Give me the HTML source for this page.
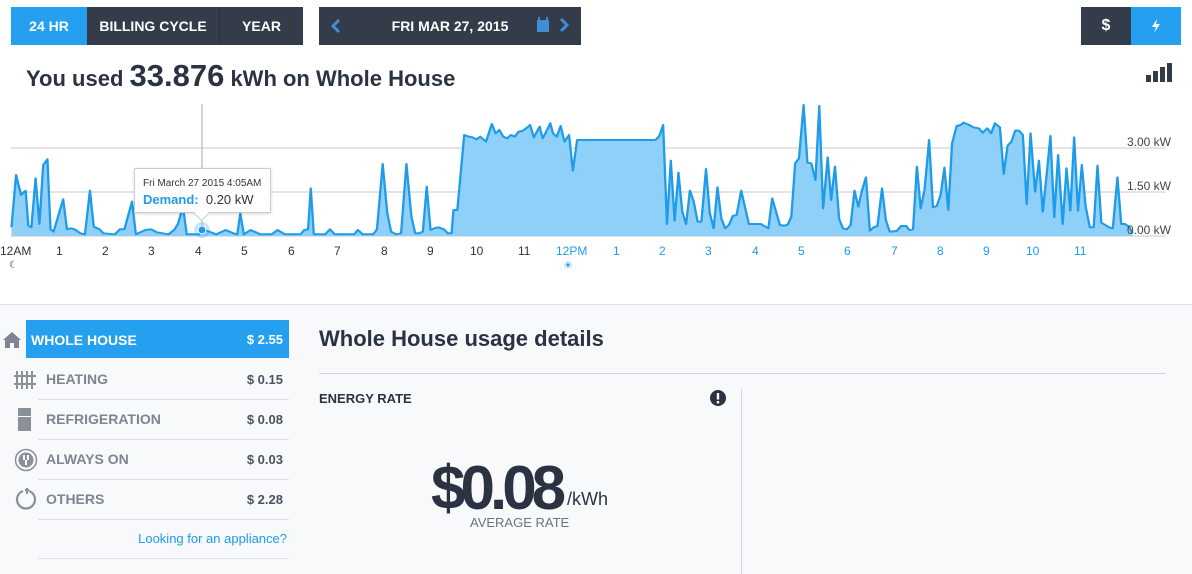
<!DOCTYPE html>
<html><head><meta charset="utf-8"><style>
*{margin:0;padding:0;box-sizing:border-box}
body{width:1192px;height:574px;overflow:hidden;background:#fff;font-family:"Liberation Sans",sans-serif;position:relative}
.a{position:absolute}
.btn{position:absolute;top:7px;height:38px;color:#fff;font-weight:bold;font-size:14px;display:flex;align-items:center;justify-content:center}
.dark{background:#343c4a}.blue{background:#25a0f0}
.lbl{position:absolute;font-size:12px;color:#333;top:244px}
.lblb{color:#1e9be9}
.row{position:absolute;left:38px;width:251px;height:40px;border-bottom:1px solid #dde1e5}
.row .n{position:absolute;left:8px;top:11px;font-weight:bold;font-size:14px;color:#7d8590}
.row .v{position:absolute;right:6px;top:12px;font-weight:bold;font-size:13px;color:#4b5260}
</style></head><body>
<div class="btn blue" style="left:11px;width:76px">24 HR</div>
<div class="btn dark" style="left:87px;width:133px;border-right:1px solid #2a313c">BILLING CYCLE</div>
<div class="btn dark" style="left:220px;width:83px">YEAR</div>
<div class="btn dark" style="left:319px;width:262px">FRI MAR 27, 2015</div>
<svg class="a" style="left:330px;top:18px" width="12" height="16"><path d="M9 2 L3 8 L9 14" stroke="#3c8fd6" stroke-width="3" fill="none"/></svg>
<svg class="a" style="left:536px;top:17px" width="40" height="18"><rect x="1" y="3" width="12" height="12" fill="#3c8fd6"/><rect x="2" y="0" width="2" height="4" fill="#3c8fd6"/><rect x="10" y="0" width="2" height="4" fill="#3c8fd6"/><path d="M25 2 L31 8 L25 14" stroke="#3c8fd6" stroke-width="3" fill="none"/></svg>
<div class="btn dark" style="left:1081px;width:50px;font-size:16px">$</div>
<div class="btn blue" style="left:1131px;width:50px"><svg width="10" height="16"><path d="M6 1 L1 9 L5 9 L3 15 L9 6 L5 6 Z" fill="#fff"/></svg></div>
<div class="a" style="left:26px;top:58px;font-size:22px;font-weight:bold;color:#2b3342;white-space:nowrap">You used <span style="font-size:31px">33.876</span> kWh on Whole House</div>
<svg class="a" style="left:1146px;top:58px" width="32" height="26"><rect x="0" y="17" width="5" height="7" fill="#343c4a"/><rect x="7" y="13" width="5" height="11" fill="#343c4a"/><rect x="14" y="9" width="5" height="15" fill="#343c4a"/><rect x="21" y="5" width="5" height="19" fill="#343c4a"/></svg>
<svg class="a" style="left:0;top:0" width="1192" height="300">
<defs>
<g id="p1"><polyline points="30,708 30,682 42,525 55,585 62,577 67,572 74,677 82,682 93,535 103,672 113,495 124,478 132,688 140,695 165,598 175,688 185,685 195,688 210,700 222,703 235,572 245,680 260,688 270,700 300,703 313,688 325,688 345,605 355,703 380,690 395,688 410,697 440,703 455,690 465,672 478,620 488,703 520,703 535,690 565,703 590,690 610,700 620,703 628,640 637,703 655,690 665,695 680,703 710,703 725,690 745,703 785,703 795,690 805,688 812,565 820,703 850,703 862,688 875,703 925,703 935,690 948,703 975,703 985,688 1000,492 1012,640 1022,695 1035,703 1048,700 1062,492 1075,650 1085,700 1095,700 1105,695 1115,560 1125,690 1135,685 1145,682 1160,688 1170,700 1180,700 1185,630 1195,630 1213,405 1225,410 1235,412 1245,418 1255,410 1270,425 1285,372 1295,400 1305,390 1315,410 1325,415 1335,405 1345,410 1355,395 1365,393 1375,385 1385,375 1395,412 1410,380 1418,415 1425,400 1438,370 1445,400 1455,410 1465,378 1475,425 1487,405 1497,512 1508,420 1572,420"/></g>
</defs>
<line x1="11" y1="148" x2="1166" y2="148" stroke="#c8c8c8"/>
<line x1="11" y1="192" x2="1166" y2="192" stroke="#c8c8c8"/>
<line x1="11" y1="236" x2="1166" y2="236" stroke="#c8c8c8"/>
<line x1="202" y1="104" x2="202" y2="236" stroke="#aaa"/>
<g transform="scale(0.3827,0.3333)">
<polygon fill="#8fd0f8" points="30,708 30,682 42,525 55,585 62,577 67,572 74,677 82,682 93,535 103,672 113,495 124,478 132,688 140,695 165,598 175,688 185,685 195,688 210,700 222,703 235,572 245,680 260,688 270,700 300,703 313,688 325,688 345,605 355,703 380,690 395,688 410,697 440,703 455,690 465,672 478,620 488,703 520,703 535,690 565,703 590,690 610,700 620,703 628,640 637,703 655,690 665,695 680,703 710,703 725,690 745,703 785,703 795,690 805,688 812,565 820,703 850,703 862,688 875,703 925,703 935,690 948,703 975,703 985,688 1000,492 1012,640 1022,695 1035,703 1048,700 1062,492 1075,650 1085,700 1095,700 1105,695 1115,560 1125,690 1135,685 1145,682 1160,688 1170,700 1180,700 1185,630 1195,630 1213,405 1225,410 1235,412 1245,418 1255,410 1270,425 1285,372 1295,400 1305,390 1315,410 1325,415 1335,405 1345,410 1355,395 1365,393 1375,385 1385,375 1395,412 1410,380 1418,415 1425,400 1438,370 1445,400 1455,410 1465,378 1475,425 1487,405 1497,512 1508,420 1572,420 1572,708"/>
<polyline fill="none" stroke="#1e9be9" stroke-width="6" stroke-linejoin="round" points="30,682 42,525 55,585 62,577 67,572 74,677 82,682 93,535 103,672 113,495 124,478 132,688 140,695 165,598 175,688 185,685 195,688 210,700 222,703 235,572 245,680 260,688 270,700 300,703 313,688 325,688 345,605 355,703 380,690 395,688 410,697 440,703 455,690 465,672 478,620 488,703 520,703 535,690 565,703 590,690 610,700 620,703 628,640 637,703 655,690 665,695 680,703 710,703 725,690 745,703 785,703 795,690 805,688 812,565 820,703 850,703 862,688 875,703 925,703 935,690 948,703 975,703 985,688 1000,492 1012,640 1022,695 1035,703 1048,700 1062,492 1075,650 1085,700 1095,700 1105,695 1115,560 1125,690 1135,685 1145,682 1160,688 1170,700 1180,700 1185,630 1195,630 1213,405 1225,410 1235,412 1245,418 1255,410 1270,425 1285,372 1295,400 1305,390 1315,410 1325,415 1335,405 1345,410 1355,395 1365,393 1375,385 1385,375 1395,412 1410,380 1418,415 1425,400 1438,370 1445,400 1455,410 1465,378 1475,425 1487,405 1497,512 1508,420 1572,420"/>
</g>
<g transform="translate(600,0) scale(0.3827,0.3333)">
<polygon fill="#8fd0f8" points="0,708 0,420 145,420 155,408 165,375 175,672 185,482 195,662 205,518 215,635 225,672 235,572 245,605 255,665 265,665 277,507 287,640 297,685 307,562 317,655 327,685 337,675 347,648 357,645 369,572 379,622 389,672 410,672 420,672 440,685 450,595 460,635 470,675 480,677 490,675 500,650 510,490 520,475 532,315 542,488 552,490 563,540 573,318 583,625 595,472 604,600 614,500 625,658 635,685 645,688 655,675 665,572 675,620 685,570 695,532 705,692 715,682 725,678 737,565 747,660 757,695 775,693 787,678 800,678 808,690 818,688 828,500 838,625 848,570 860,420 870,622 880,618 890,585 900,503 910,630 920,430 932,378 942,375 950,368 965,375 975,382 990,385 1000,398 1012,385 1022,400 1032,370 1045,382 1055,522 1065,437 1075,425 1085,392 1095,392 1105,405 1115,612 1125,400 1137,575 1147,482 1157,635 1167,525 1177,408 1187,652 1197,465 1209,672 1219,505 1229,632 1239,412 1249,632 1259,495 1269,620 1280,682 1290,682 1300,497 1310,668 1320,675 1330,682 1340,685 1352,532 1362,672 1372,672 1382,680 1392,700 1392,708"/>
<polyline fill="none" stroke="#1e9be9" stroke-width="6" stroke-linejoin="round" points="-4,420 145,420 155,408 165,375 175,672 185,482 195,662 205,518 215,635 225,672 235,572 245,605 255,665 265,665 277,507 287,640 297,685 307,562 317,655 327,685 337,675 347,648 357,645 369,572 379,622 389,672 410,672 420,672 440,685 450,595 460,635 470,675 480,677 490,675 500,650 510,490 520,475 532,315 542,488 552,490 563,540 573,318 583,625 595,472 604,600 614,500 625,658 635,685 645,688 655,675 665,572 675,620 685,570 695,532 705,692 715,682 725,678 737,565 747,660 757,695 775,693 787,678 800,678 808,690 818,688 828,500 838,625 848,570 860,420 870,622 880,618 890,585 900,503 910,630 920,430 932,378 942,375 950,368 965,375 975,382 990,385 1000,398 1012,385 1022,400 1032,370 1045,382 1055,522 1065,437 1075,425 1085,392 1095,392 1105,405 1115,612 1125,400 1137,575 1147,482 1157,635 1167,525 1177,408 1187,652 1197,465 1209,672 1219,505 1229,632 1239,412 1249,632 1259,495 1269,620 1280,682 1290,682 1300,497 1310,668 1320,675 1330,682 1340,685 1352,532 1362,672 1372,672 1382,680 1392,700"/>
</g>
<circle cx="202" cy="230" r="8" fill="#1e9be9" opacity="0.25"/>
<circle cx="202" cy="230" r="4" fill="#1e9be9" stroke="#fff" stroke-width="1"/>
<text x="1171" y="146" font-size="12" fill="#444" text-anchor="end" font-family="Liberation Sans">3.00 kW</text>
<text x="1171" y="190" font-size="12" fill="#444" text-anchor="end" font-family="Liberation Sans">1.50 kW</text>
<text x="1171" y="234" font-size="12" fill="#444" text-anchor="end" font-family="Liberation Sans">0.00 kW</text>
</svg>
<div class="a" style="left:134px;top:168px;width:137px;height:45px;background:#fff;border:1px solid #ccc;box-shadow:0 1px 3px rgba(0,0,0,.15)">
<div style="position:absolute;left:8px;top:9px;font-size:10px;color:#333;white-space:nowrap">Fri March 27 2015 4:05AM</div>
<div style="position:absolute;left:8px;top:23px;font-size:13px;color:#333;white-space:nowrap"><b style="color:#1e9be9">Demand:</b>&nbsp; 0.20 kW</div>
</div>
<div class="a" style="left:196px;top:208px;width:11px;height:11px;background:#fff;border-right:1px solid #ccc;border-bottom:1px solid #ccc;transform:rotate(45deg)"></div>
<div class="lbl" style="left:0">12AM</div><div class="a" style="left:9px;top:260px;font-size:10px;color:#333">☾</div>
<div class="lbl" style="left:56px">1</div><div class="lbl" style="left:102px">2</div><div class="lbl" style="left:148px">3</div><div class="lbl" style="left:195px">4</div><div class="lbl" style="left:241px">5</div><div class="lbl" style="left:288px">6</div><div class="lbl" style="left:334px">7</div><div class="lbl" style="left:381px">8</div><div class="lbl" style="left:427px">9</div><div class="lbl" style="left:470px">10</div><div class="lbl" style="left:518px">11</div>
<div class="lbl lblb" style="left:556px">12PM</div><div class="a" style="left:563px;top:259px;font-size:11px;color:#1e9be9">☀</div>
<div class="lbl lblb" style="left:613px">1</div><div class="lbl lblb" style="left:659px">2</div><div class="lbl lblb" style="left:705px">3</div><div class="lbl lblb" style="left:752px">4</div><div class="lbl lblb" style="left:798px">5</div><div class="lbl lblb" style="left:844px">6</div><div class="lbl lblb" style="left:891px">7</div><div class="lbl lblb" style="left:937px">8</div><div class="lbl lblb" style="left:983px">9</div><div class="lbl lblb" style="left:1026px">10</div><div class="lbl lblb" style="left:1074px">11</div>
<div class="a" style="left:0;top:304px;width:1192px;height:270px;background:#f7f9fb;border-top:1px solid #dfe3e6"></div>
<svg class="a" style="left:2px;top:331px" width="20" height="18"><path d="M10 1 L1 9 L3 9 L3 17 L8 17 L8 12 L12 12 L12 17 L17 17 L17 9 L19 9 Z" fill="#7d8590"/></svg>
<div class="a" style="left:26px;top:320px;width:263px;height:38px;background:#25a0f0"><span style="position:absolute;left:5px;top:12px;color:#fff;font-weight:bold;font-size:14px">WHOLE HOUSE</span><span style="position:absolute;right:6px;top:12px;color:#fff;font-weight:bold;font-size:13px">$ 2.55</span></div>
<div class="row" style="top:360px"><span class="n">HEATING</span><span class="v">$ 0.15</span></div>
<div class="row" style="top:400px"><span class="n">REFRIGERATION</span><span class="v">$ 0.08</span></div>
<div class="row" style="top:440px"><span class="n">ALWAYS ON</span><span class="v">$ 0.03</span></div>
<div class="row" style="top:480px"><span class="n">OTHERS</span><span class="v">$ 2.28</span></div>
<div class="row" style="top:520px;left:38px;height:39px"><span style="position:absolute;right:2px;top:11px;font-size:13px;color:#1e9be9">Looking for an appliance?</span></div>
<svg class="a" style="left:14px;top:370px" width="24" height="20"><g fill="#8a9099"><rect x="2" y="1" width="2" height="18"/><rect x="7" y="1" width="2" height="18"/><rect x="12" y="1" width="2" height="18"/><rect x="17" y="1" width="2" height="18"/><rect x="0" y="5" width="22" height="2"/><rect x="0" y="13" width="22" height="2"/></g></svg>
<svg class="a" style="left:18px;top:408px" width="14" height="24"><rect x="0" y="0" width="13" height="8" fill="#8a9099"/><rect x="0" y="9" width="13" height="14" fill="#8a9099"/></svg>
<svg class="a" style="left:14px;top:448px" width="24" height="24"><circle cx="12" cy="12" r="10.5" fill="none" stroke="#8a9099" stroke-width="1.5"/><circle cx="12" cy="12" r="7.5" fill="#8a9099"/><rect x="9" y="7" width="2" height="5" fill="#fff"/><rect x="13" y="7" width="2" height="5" fill="#fff"/><rect x="11" y="12" width="2" height="5" fill="#fff"/></svg>
<svg class="a" style="left:15px;top:487px" width="22" height="24"><path d="M8 4 A9 9 0 1 0 14 4" fill="none" stroke="#8a9099" stroke-width="2.2"/><path d="M12 1 L12 7 M10 3 L14 3" stroke="#8a9099" stroke-width="2"/></svg>
<div class="a" style="left:319px;top:326px;font-size:22px;font-weight:bold;color:#2b3342">Whole House usage details</div>
<div class="a" style="left:319px;top:373px;width:847px;height:1px;background:#d3d7db"></div>
<div class="a" style="left:319px;top:391px;font-size:13px;font-weight:bold;color:#2b3342">ENERGY RATE</div>
<svg class="a" style="left:710px;top:390px" width="16" height="16"><circle cx="8" cy="8" r="8" fill="#2b3342"/><rect x="6.8" y="3" width="2.4" height="6.5" fill="#fff"/><rect x="6.8" y="11" width="2.4" height="2.4" fill="#fff"/></svg>
<div class="a" style="left:741px;top:389px;width:1px;height:185px;background:#d3d7db"></div>
<div class="a" style="left:431px;top:458px;white-space:nowrap;color:#2b3342;font-size:62px;line-height:62px;font-weight:bold;letter-spacing:-5px">$0.08</div>
<div class="a" style="left:567px;top:489px;font-size:18px;color:#2b3342">/kWh</div>
<div class="a" style="left:470px;top:515px;font-size:13px;color:#6b7280">AVERAGE RATE</div>
</body></html>
